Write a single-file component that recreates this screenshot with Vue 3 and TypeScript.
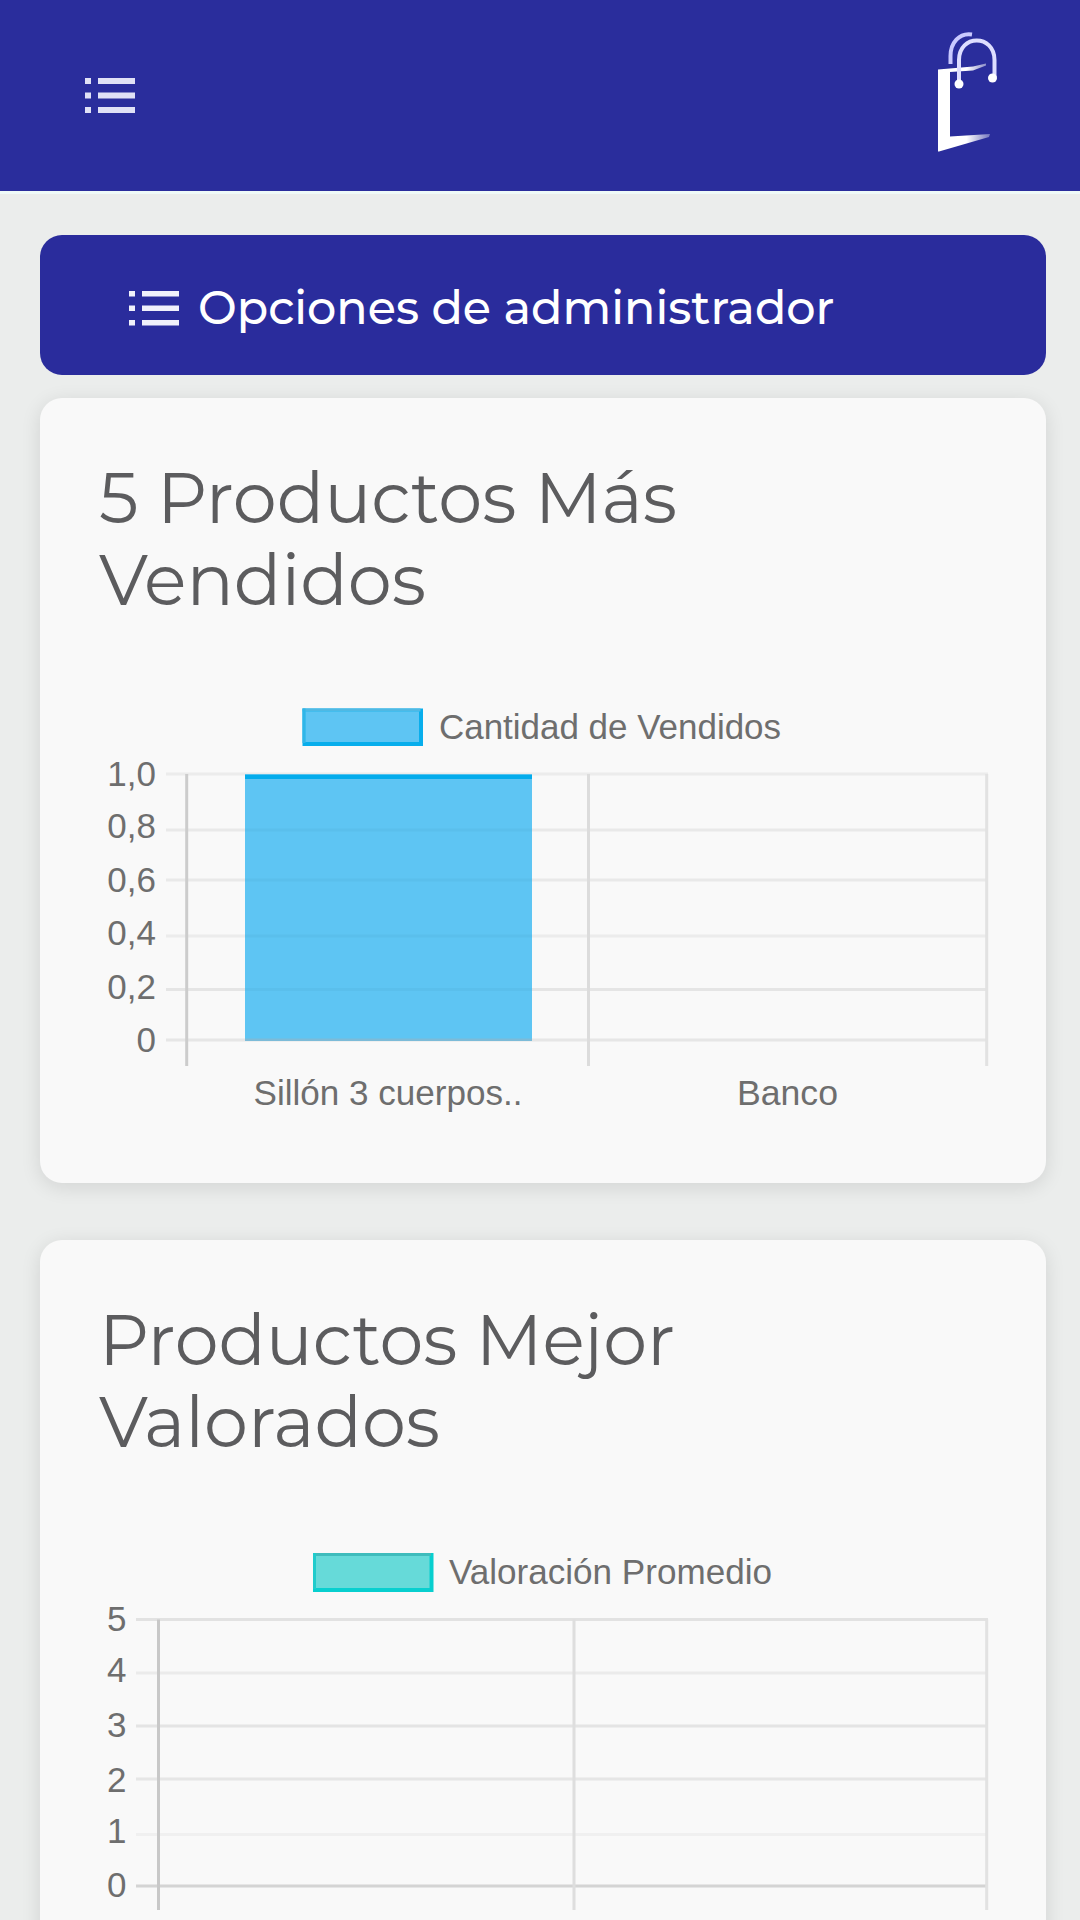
<script setup lang="ts">
interface Line { text: string; x: number; y: number; length: number }
interface Tick { label: string; baseline: number; y: number; tone: string }
interface Rule { x: number; tone: string }
interface Category { label: string; x: number; length: number }
interface Chart {
  id: string
  title: Line[]
  legend: { label: string; x: number; y: number; h: number; textX: number; baseline: number; length: number; fill: string; edge: string; top: string; left: string }
  tickX: number
  gridLeft: number
  top: number
  bottom: number
  ticks: Tick[]
  rules: Rule[]
  bar?: { x: number; y: number; w: number; h: number }
  categories: Category[]
  labelY: number
  height: number
}

// Coordinates are local to each card.
const charts: Chart[] = [
  {
    id: 'vendidos',
    title: [
      { text: '5 Productos Más', x: 59, y: 125, length: 578 },
      { text: 'Vendidos', x: 59, y: 206.5, length: 327 },
    ],
    legend: { label: 'Cantidad de Vendidos', x: 262.5, y: 310.5, h: 37.5, textX: 399, baseline: 341, length: 342, fill: '#5ec5f3', edge: '#08aeec', top: '#4fb9e4', left: '#30b6e8' },
    tickX: 116,
    gridLeft: 126,
    top: 376,
    bottom: 668,
    ticks: [
      { label: '1,0', baseline: 387.5, y: 376, tone: '#ececec' },
      { label: '0,8', baseline: 440, y: 432, tone: '#e9e9e9' },
      { label: '0,6', baseline: 493.5, y: 482, tone: '#e9e9e9' },
      { label: '0,4', baseline: 547, y: 538, tone: '#ececec' },
      { label: '0,2', baseline: 600.5, y: 591.5, tone: '#e5e5e5' },
      { label: '0', baseline: 653.5, y: 642, tone: '#e6e6e6' },
    ],
    rules: [{ x: 146.7, tone: '#cccccc' }, { x: 548.5, tone: '#dcdcdc' }, { x: 946.7, tone: '#e2e2e2' }],
    bar: { x: 205, y: 376.5, w: 287, h: 266.5 },
    categories: [
      { label: 'Sillón 3 cuerpos..', x: 213.5, length: 269 },
      { label: 'Banco', x: 697, length: 101 },
    ],
    labelY: 706.5,
    height: 785,
  },
  {
    id: 'valorados',
    title: [
      { text: 'Productos Mejor', x: 59, y: 125, length: 576 },
      { text: 'Valorados', x: 59, y: 207, length: 341 },
    ],
    legend: { label: 'Valoración Promedio', x: 273, y: 313, h: 39, textX: 409, baseline: 343.5, length: 323, fill: '#66dad9', edge: '#08cfcf', top: '#3fbcbc', left: '#20cccc' },
    tickX: 86.5,
    gridLeft: 96,
    top: 379.5,
    bottom: 670,
    ticks: [
      { label: '5', baseline: 391, y: 379.5, tone: '#e2e2e2' },
      { label: '4', baseline: 442, y: 433, tone: '#ebebeb' },
      { label: '3', baseline: 497, y: 486, tone: '#e4e4e4' },
      { label: '2', baseline: 551.5, y: 539, tone: '#e6e6e6' },
      { label: '1', baseline: 603, y: 594.5, tone: '#f0f0f0' },
      { label: '0', baseline: 657, y: 646, tone: '#d4d4d4' },
    ],
    rules: [{ x: 118.5, tone: '#c8c8c8' }, { x: 534, tone: '#dedede' }, { x: 946.7, tone: '#e2e2e2' }],
    categories: [],
    labelY: 711,
    height: 785,
  },
]
</script>

<template>
  <div class="page">
    <header class="topbar">
      <svg class="list-icon" viewBox="0 0 50 38" width="50" height="38">
        <path d="M0 1h6v6H0zM13 1h37v6H13zM0 15.5h6v6H0zM13 15.5h37v6H13zM0 30h6v6H0zM13 30h37v6H13z" />
      </svg>
      <svg class="logo" viewBox="0 0 64 124" width="64" height="124">
        <defs>
          <linearGradient id="fade" x1="0" x2="1" y1="0" y2="0">
            <stop offset="0.55" stop-color="#fff" />
            <stop offset="1" stop-color="#fff" stop-opacity="0.35" />
          </linearGradient>
        </defs>
        <path d="M2 41.5L37 38.500L50 35.500V37.500L37 42.500L14 44V108.500L54 106L53 109L3 123.500H2Z" fill="url(#fade)" />
        <path d="M14.500 36V28C14.500 15 23 4.500 36 6.500" fill="none" stroke="#c9c9ff" stroke-width="4" />
        <path d="M23 55V32C23 6 58.500 6 58.500 32V49" fill="none" stroke="#dedeff" stroke-width="4" />
        <circle cx="23" cy="56" r="4.500" fill="#fff" />
        <circle cx="56.500" cy="50" r="4.500" fill="#fff" />
      </svg>
    </header>

    <main class="content">
      <button class="options" type="button">
        <svg class="list-icon" viewBox="0 0 50 38" width="50" height="38">
          <path d="M0 1h6v5.500H0zM13 1h37v5.500H13zM0 15.500h6v5.500H0zM13 15.500h37v5.500H13zM0 30h6v5.500H0zM13 30h37v5.500H13z" />
        </svg>
        <span class="options-label">Opciones de administrador</span>
      </button>

      <section v-for="c in charts" :key="c.id" class="card">
        <svg width="1006" :height="c.height" :viewBox="`0 0 1006 ${c.height}`">
          <text
            v-for="l in c.title" :key="l.text" class="title"
            :x="l.x" :y="l.y" :textLength="l.length" lengthAdjust="spacingAndGlyphs"
          >{{ l.text }}</text>

          <rect :x="c.legend.x" :y="c.legend.y" width="120.500" :height="c.legend.h" :fill="c.legend.edge" />
          <rect :x="c.legend.x" :y="c.legend.y" width="118" height="3" :fill="c.legend.top" />
          <rect :x="c.legend.x" :y="c.legend.y" width="3" :height="c.legend.h - 3" :fill="c.legend.left" />
          <rect :x="c.legend.x + 3" :y="c.legend.y + 3" width="113.500" :height="c.legend.h - 7" :fill="c.legend.fill" />
          <text class="label" :x="c.legend.textX" :y="c.legend.baseline" :textLength="c.legend.length" lengthAdjust="spacingAndGlyphs">{{ c.legend.label }}</text>

          <g class="grid">
            <line v-for="t in c.ticks" :key="t.label" :x1="c.gridLeft" x2="948" :y1="t.y" :y2="t.y" :stroke="t.tone" />
            <line v-for="r in c.rules" :key="r.x" :x1="r.x" :x2="r.x" :y1="c.top" :y2="c.bottom" :stroke="r.tone" />
          </g>
          <g v-if="c.bar">
            <rect :x="c.bar.x" :y="c.bar.y" :width="c.bar.w" :height="c.bar.h" fill="#5ec5f3" />
            <rect :x="c.bar.x" :y="c.bar.y" :width="c.bar.w" height="4.500" fill="#04acec" />
            <rect :x="c.bar.x" :y="c.bar.y + c.bar.h - 2.5" :width="c.bar.w" height="2.500" fill="#7cbbd8" />
            <line
              v-for="t in c.ticks.slice(1, -1)" :key="t.label" class="bar-line"
              :x1="c.bar.x" :x2="c.bar.x + c.bar.w" :y1="t.y" :y2="t.y"
            />
          </g>

          <text v-for="t in c.ticks" :key="t.label" class="label tick" :x="c.tickX" :y="t.baseline">{{ t.label }}</text>
          <text
            v-for="k in c.categories" :key="k.label" class="label"
            :x="k.x" :y="c.labelY" :textLength="k.length" lengthAdjust="spacingAndGlyphs"
          >{{ k.label }}</text>
        </svg>
      </section>
    </main>
  </div>
</template>

<style>
body {
  background: #ebedec;
}
</style>

<style scoped>
.page {
  width: 1080px;
  height: 1920px;
  overflow: hidden;
  background: #ebedec;
}
.topbar {
  box-sizing: border-box;
  height: 191px;
  padding: 28px 80px 0 85px;
  display: flex;
  justify-content: space-between;
  align-items: flex-start;
  background: #2a2d9c;
  box-shadow: 0 3px 0 #effaf8;
}
.topbar .list-icon {
  margin-top: 49px;
}
.list-icon {
  fill: #e0e1f6;
}
.content {
  padding: 44px 34px 0 40px;
}
.options {
  box-sizing: border-box;
  width: 1006px;
  height: 140px;
  padding: 0 0 0 89px;
  display: flex;
  align-items: center;
  border: 0;
  border-radius: 22px;
  background: #2a2c9c;
}
.options .list-icon {
  margin-top: 8px;
  fill: #f0f0fb;
}
.options-label {
  margin: 6px 0 0 19px;
  font: 500 46.1px/60px Montserrat, Inter, "Open Sans", sans-serif;
  white-space: nowrap;
  color: #fff;
}
.card {
  width: 1006px;
  height: 785px;
  margin: 23px 0 57px;
  border-radius: 22px;
  background: #f9f9f9;
  box-shadow: 0 4px 20px rgba(0, 0, 0, 0.11);
}
.card svg {
  display: block;
}
.title {
  font: 400 71px Montserrat, Inter, "Open Sans", sans-serif;
  fill: #5c5c5e;
}
.label {
  font: 400 35px "Liberation Sans", Arial, sans-serif;
  fill: #6e6e6e;
}
.tick {
  text-anchor: end;
}
.grid line {
  stroke-width: 3px;
}
.bar-line {
  stroke: #5abfec;
  stroke-width: 3px;
}
</style>
